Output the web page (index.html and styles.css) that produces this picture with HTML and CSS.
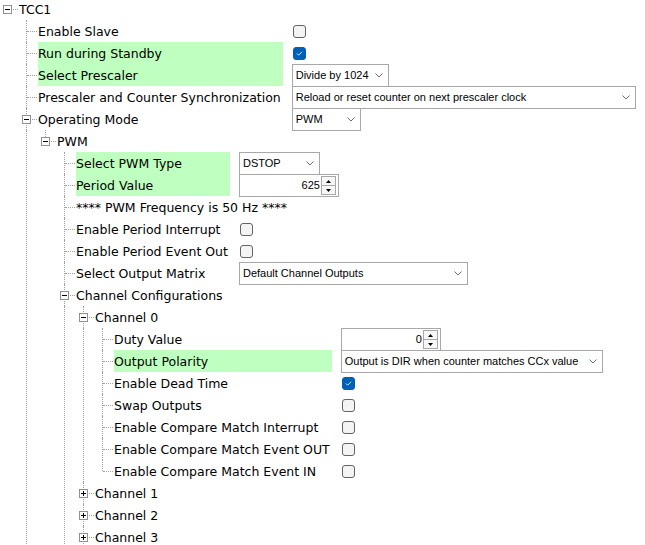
FILE: index.html
```html
<!DOCTYPE html>
<html>
<head>
<meta charset="utf-8">
<title>TCC1</title>
<link rel="stylesheet" href="styles.css">
</head>
<body>
<div class="tree">
  <div class="kids">
    <div class="row"><span class="twig nl"><span class="box minus"></span></span><span class="lbl span">TCC1</span></div>
    <div class="sub">
      <div class="kids">
        <div class="row"><span class="twig"></span><span class="lbl">Enable Slave</span><span class="ctl"><span class="chk"></span></span></div>
        <div class="row"><span class="twig"></span><span class="lbl hl">Run during Standby</span><span class="ctl"><span class="chk on"><svg viewBox="0 0 13 13"><polyline points="3.5,6.5 5.5,8.5 9.5,4.5"/></svg></span></span></div>
        <div class="row"><span class="twig"></span><span class="lbl hl">Select Prescaler</span><span class="ctl"><span class="dd w-presc"><span class="val">Divide by 1024</span><svg class="chev" viewBox="0 0 8 5"><polyline points="0.5,0.5 4,4 7.5,0.5"/></svg></span></span></div>
        <div class="row"><span class="twig"></span><span class="lbl">Prescaler and Counter Synchronization</span><span class="ctl"><span class="dd w-sync"><span class="val">Reload or reset counter on next prescaler clock</span><svg class="chev" viewBox="0 0 8 5"><polyline points="0.5,0.5 4,4 7.5,0.5"/></svg></span></span></div>
        <div class="row"><span class="twig"><span class="box minus"></span></span><span class="lbl">Operating Mode</span><span class="ctl"><span class="dd w-mode"><span class="val">PWM</span><svg class="chev" viewBox="0 0 8 5"><polyline points="0.5,0.5 4,4 7.5,0.5"/></svg></span></span></div>
        <div class="sub cont">
          <div class="kids">
            <div class="row last"><span class="twig"><span class="box minus"></span></span><span class="lbl span">PWM</span></div>
            <div class="sub">
              <div class="kids">
                <div class="row"><span class="twig"></span><span class="lbl hl">Select PWM Type</span><span class="ctl"><span class="dd w-type"><span class="val">DSTOP</span><svg class="chev" viewBox="0 0 8 5"><polyline points="0.5,0.5 4,4 7.5,0.5"/></svg></span></span></div>
                <div class="row"><span class="twig"></span><span class="lbl hl">Period Value</span><span class="ctl"><span class="spin"><span class="val">625</span><span class="btns"><span class="btn"><svg viewBox="0 0 5 3"><polygon points="0,3 2.5,0 5,3"/></svg></span><span class="btn dn"><svg viewBox="0 0 5 3"><polygon points="0,0 2.5,3 5,0"/></svg></span></span></span></span></div>
                <div class="row"><span class="twig"></span><span class="lbl span">**** PWM Frequency is 50 Hz ****</span></div>
                <div class="row"><span class="twig"></span><span class="lbl">Enable Period Interrupt</span><span class="ctl"><span class="chk"></span></span></div>
                <div class="row"><span class="twig"></span><span class="lbl">Enable Period Event Out</span><span class="ctl"><span class="chk"></span></span></div>
                <div class="row"><span class="twig"></span><span class="lbl">Select Output Matrix</span><span class="ctl"><span class="dd w-matrix"><span class="val">Default Channel Outputs</span><svg class="chev" viewBox="0 0 8 5"><polyline points="0.5,0.5 4,4 7.5,0.5"/></svg></span></span></div>
                <div class="row"><span class="twig"><span class="box minus"></span></span><span class="lbl span">Channel Configurations</span></div>
                <div class="sub cont">
                  <div class="kids">
                    <div class="row"><span class="twig"><span class="box minus"></span></span><span class="lbl span">Channel 0</span></div>
                    <div class="sub cont">
                      <div class="kids">
                        <div class="row"><span class="twig"></span><span class="lbl">Duty Value</span><span class="ctl"><span class="spin"><span class="val">0</span><span class="btns"><span class="btn"><svg viewBox="0 0 5 3"><polygon points="0,3 2.5,0 5,3"/></svg></span><span class="btn dn"><svg viewBox="0 0 5 3"><polygon points="0,0 2.5,3 5,0"/></svg></span></span></span></span></div>
                        <div class="row"><span class="twig"></span><span class="lbl hl">Output Polarity</span><span class="ctl"><span class="dd w-pol"><span class="val">Output is DIR when counter matches CCx value</span><svg class="chev" viewBox="0 0 8 5"><polyline points="0.5,0.5 4,4 7.5,0.5"/></svg></span></span></div>
                        <div class="row"><span class="twig"></span><span class="lbl">Enable Dead Time</span><span class="ctl"><span class="chk on"><svg viewBox="0 0 13 13"><polyline points="3.5,6.5 5.5,8.5 9.5,4.5"/></svg></span></span></div>
                        <div class="row"><span class="twig"></span><span class="lbl">Swap Outputs</span><span class="ctl"><span class="chk"></span></span></div>
                        <div class="row"><span class="twig"></span><span class="lbl">Enable Compare Match Interrupt</span><span class="ctl"><span class="chk"></span></span></div>
                        <div class="row"><span class="twig"></span><span class="lbl">Enable Compare Match Event OUT</span><span class="ctl"><span class="chk"></span></span></div>
                        <div class="row last"><span class="twig"></span><span class="lbl">Enable Compare Match Event IN</span><span class="ctl"><span class="chk"></span></span></div>
                      </div>
                    </div>
                    <div class="row"><span class="twig"><span class="box plus"></span></span><span class="lbl span">Channel 1</span></div>
                    <div class="row"><span class="twig"><span class="box plus"></span></span><span class="lbl span">Channel 2</span></div>
                    <div class="row"><span class="twig"><span class="box plus"></span></span><span class="lbl span">Channel 3</span></div>
                  </div>
                </div>
              </div>
            </div>
          </div>
        </div>
      </div>
    </div>
  </div>
</div>
</body>
</html>
```

FILE: styles.css
```css
html, body {
  margin: 0;
  padding: 0;
  overflow: hidden;
  background: #ffffff;
}

.tree {
  margin: -2px 0 0 7px;
  font-family: "DejaVu Sans", sans-serif;
  font-size: 12.5px;
  color: #000;
}

.kids {
  display: grid;
  grid-template-columns: 12px max-content 1fr;
  align-items: start;
}

.row {
  display: contents;
}

.sub {
  grid-column: 1 / -1;
  contain: inline-size;
}

.sub > .kids {
  margin-left: 19px;
}

.sub.cont {
  border-left: 1px dotted #a0a0a0;
}

.sub.cont > .kids {
  margin-left: 18px;
}

/* tree connectors */
.twig {
  position: relative;
  height: 22px;
}

.twig::before {
  content: "";
  position: absolute;
  left: 0;
  top: 0;
  bottom: 0;
  border-left: 1px dotted #a0a0a0;
}

.last > .twig::before {
  bottom: 11px;
}

.twig.nl::before {
  display: none;
}

.twig::after {
  content: "";
  position: absolute;
  left: 1px;
  right: 1px;
  top: 11px;
  border-top: 1px dotted #a0a0a0;
}

.box {
  position: absolute;
  left: -4px;
  top: 7px;
  width: 9px;
  height: 9px;
  box-sizing: border-box;
  border: 1px solid #919191;
  background: #fff;
  z-index: 1;
}

.box::before {
  content: "";
  position: absolute;
  left: 1px;
  top: 3px;
  width: 5px;
  height: 1px;
  background: #000;
}

.box.plus::after {
  content: "";
  position: absolute;
  left: 3px;
  top: 1px;
  width: 1px;
  height: 5px;
  background: #000;
}

/* labels */
.lbl {
  height: 22px;
  box-sizing: border-box;
  padding: 2px 2px 0 0;
  line-height: 19px;
  white-space: nowrap;
}

.lbl.span {
  grid-column: 2 / -1;
}

.lbl.hl {
  background: #bfffbf;
}

/* controls */
.ctl {
  height: 22px;
  padding-left: 9px;
  display: flex;
  align-items: flex-start;
}

.chk {
  width: 13px;
  height: 13px;
  box-sizing: border-box;
  margin: 5px 0 0 1px;
  border: 1px solid #636363;
  border-radius: 3px;
  background: #f4f4f4;
  display: flex;
}

.chk.on {
  background: #005fb8;
  border-color: #005fb8;
}

.chk svg {
  width: 11px;
  height: 11px;
}

.chk polyline {
  fill: none;
  stroke: #ffffff;
  stroke-width: 1;
}

.dd,
.spin {
  display: flex;
  align-items: center;
  height: 23px;
  box-sizing: border-box;
  border: 1px solid #a8a8a8;
  background: #fff;
  font-family: "Liberation Sans", Arial, sans-serif;
  font-size: 11px;
  line-height: 21px;
  color: #000;
}

.dd {
  padding-left: 3px;
}

.dd .val {
  flex: 1;
  white-space: nowrap;
  overflow: hidden;
}

.chev {
  width: 8px;
  height: 5px;
  margin: 0 5px 0 4px;
  flex: none;
}

.chev polyline {
  fill: none;
  stroke: #6a6a6a;
  stroke-width: 1;
}

.w-presc { width: 97px; }
.w-sync { width: 344px; }
.w-mode { width: 69px; }
.w-type { width: 81px; }
.w-matrix { width: 229px; }
.w-pol { width: 262px; }

.spin {
  width: 100px;
  align-items: stretch;
}

.spin .val {
  flex: 1;
  text-align: right;
  padding-right: 1px;
}

.btns {
  display: flex;
  flex-direction: column;
  width: 15px;
  margin: 1px 2px 1px 0;
}

.btn {
  flex: 1;
  display: flex;
  align-items: center;
  justify-content: center;
  border: 1px solid #a8a8a8;
  background: #f7f7f7;
}

.btn.dn {
  border-top: none;
}

.btn svg {
  width: 5px;
  height: 3px;
}

.btn polygon {
  fill: #000;
}
```
